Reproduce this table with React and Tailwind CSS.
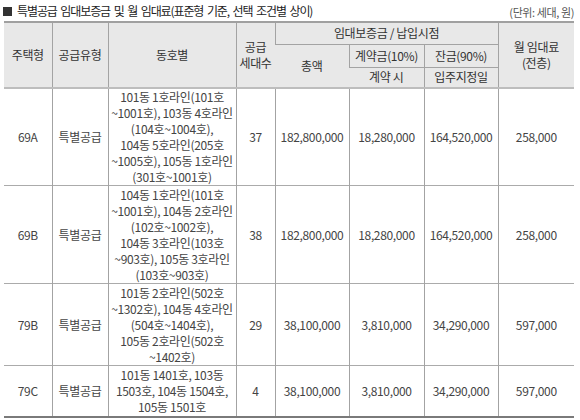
import React from "react";

const font = { fontFamily: '"Noto Sans CJK KR", "Noto Sans", sans-serif' };

const rows = [
  {
    type: "69A",
    h: "h-[97px]",
    units: [
      "101동 1호라인(101호",
      "~1001호), 103동 4호라인",
      "(104호~1004호),",
      "104동 5호라인(205호",
      "~1005호), 105동 1호라인",
      "(301호~1001호)",
    ],
    count: "37",
    total: "182,800,000",
    dep: "18,280,000",
    bal: "164,520,000",
    rent: "258,000",
  },
  {
    type: "69B",
    h: "h-[98px]",
    units: [
      "104동 1호라인(101호",
      "~1001호), 104동 2호라인",
      "(102호~1002호),",
      "104동 3호라인(103호",
      "~903호), 105동 3호라인",
      "(103호~903호)",
    ],
    count: "38",
    total: "182,800,000",
    dep: "18,280,000",
    bal: "164,520,000",
    rent: "258,000",
  },
  {
    type: "79B",
    h: "h-[82px]",
    units: [
      "101동 2호라인(502호",
      "~1302호), 104동 4호라인",
      "(504호~1404호),",
      "105동 2호라인(502호",
      "~1402호)",
    ],
    count: "29",
    total: "38,100,000",
    dep: "3,810,000",
    bal: "34,290,000",
    rent: "597,000",
  },
  {
    type: "79C",
    h: "h-[51px]",
    units: ["101동 1401호, 103동", "1503호, 104동 1504호,", "105동 1501호"],
    count: "4",
    total: "38,100,000",
    dep: "3,810,000",
    bal: "34,290,000",
    rent: "597,000",
  },
];

export default function App() {
  const th =
    "border-l border-[#a3a3a3] first:border-l-0 p-0 font-normal text-center align-middle leading-[16px]";
  const td =
    "border-l border-[#a3a3a3] first:border-l-0 p-0 text-center align-middle leading-[16px] whitespace-nowrap";
  return (
    <div
      className="w-[580px] h-[420px] bg-white text-[#444] overflow-hidden"
      style={font}
    >
      <div className="flex items-end justify-between pl-[3px] pr-[6px] h-[21px]">
        <div className="flex items-center text-[12px] leading-[18px] text-[#222] tracking-[-1.1px] [word-spacing:2px] pb-[1px]">
          <span className="inline-block w-[9px] h-[9px] bg-[#333] mr-[5px]"></span>
          특별공급 임대보증금 및 월 임대료(표준형 기준, 선택 조건별 상이)
        </div>
        <div className="text-[11px] leading-[16px] text-[#555] tracking-[-0.4px] pb-[1px]">
          (단위: 세대, 원)
        </div>
      </div>
      <table className="ml-[4px] w-[570px] table-fixed border-collapse text-[12px] tracking-[-0.35px]">
        <colgroup>
          <col className="w-[48px]" />
          <col className="w-[56px]" />
          <col className="w-[128px]" />
          <col className="w-[39px]" />
          <col className="w-[74px]" />
          <col className="w-[75px]" />
          <col className="w-[74px]" />
          <col className="w-[76px]" />
        </colgroup>
        <thead className="bg-[#e8e8e8] text-[#333]">
          <tr className="h-[22px] border-t-2 border-[#a0a0a0]">
            <th rowSpan={3} className={th}>
              주택형
            </th>
            <th rowSpan={3} className={th}>
              공급유형
            </th>
            <th rowSpan={3} className={th}>
              동호별
            </th>
            <th rowSpan={3} className={th}>
              공급
              <br />
              세대수
            </th>
            <th colSpan={3} className={th}>
              임대보증금 / 납입시점
            </th>
            <th rowSpan={3} className={th}>
              월 임대료
              <br />
              (전층)
            </th>
          </tr>
          <tr className="h-[23px]">
            <th rowSpan={2} className={th + " border-t border-[#a3a3a3]"}>
              총액
            </th>
            <th className={th + " border-t border-[#a3a3a3]"}>계약금(10%)</th>
            <th className={th + " border-t border-[#a3a3a3]"}>잔금(90%)</th>
          </tr>
          <tr className="h-[21px] border-b-2 border-[#bdbdbd]">
            <th className={th + " border-t border-[#a3a3a3]"}>계약 시</th>
            <th className={th + " border-t border-[#a3a3a3]"}>입주지정일</th>
          </tr>
        </thead>
        <tbody>
          {rows.map((r, i) => (
            <tr
              key={r.type}
              className={
                r.h +
                (i === rows.length - 1
                  ? " border-b-2 border-[#7a7a7a]"
                  : " border-b border-[#ababab]")
              }
            >
              <td className={td}>{r.type}</td>
              <td className={td}>특별공급</td>
              <td className={td}>
                {r.units.map((u, k) => (
                  <div key={k}>{u}</div>
                ))}
              </td>
              <td className={td}>{r.count}</td>
              <td className={td}>{r.total}</td>
              <td className={td}>{r.dep}</td>
              <td className={td}>{r.bal}</td>
              <td className={td}>{r.rent}</td>
            </tr>
          ))}
        </tbody>
      </table>
    </div>
  );
}
